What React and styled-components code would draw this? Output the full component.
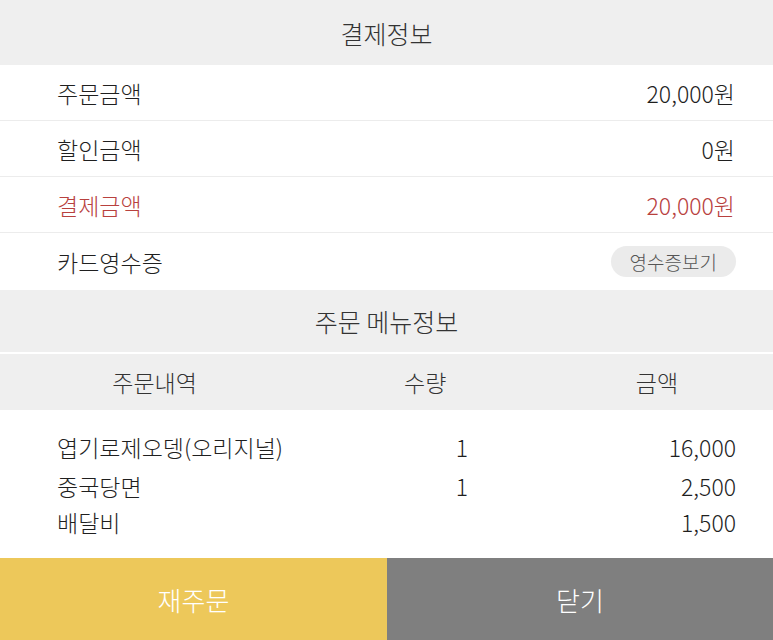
import styled, { createGlobalStyle } from "styled-components";

const GlobalStyle = createGlobalStyle`
  html, body {
    margin: 0;
    padding: 0;
    background: #fff;
  }
  body {
    font-family: "Noto Sans CJK KR", "Noto Sans", sans-serif;
    color: #222;
  }
  * { box-sizing: border-box; }
`;

const Page = styled.div`
  width: 773px;
  height: 640px;
  display: flex;
  flex-direction: column;
  background: #fff;
`;

const SectionTitle = styled.div`
  height: ${(p) => p.$h}px;
  display: flex;
  align-items: center;
  justify-content: center;
  background: #efefef;
  font-size: 25px;
  font-weight: 300;
  color: #333;
`;

const InfoRow = styled.div`
  height: ${(p) => p.$h || 56}px;
  display: flex;
  align-items: center;
  justify-content: space-between;
  padding: 0 38px 0 57px;
  font-size: 23px;
  font-weight: 300;
  color: ${(p) => (p.$accent ? "#b8413e" : "#1f1f1f")};
  border-bottom: ${(p) => (p.$last ? "none" : "1px solid #ececec")};
`;

const ReceiptButton = styled.button`
  font-family: inherit;
  font-size: 19px;
  font-weight: 300;
  color: #555;
  background: #ebebeb;
  border: none;
  border-radius: 16px;
  height: 31px;
  padding: 0 19px;
  margin-right: -1px;
`;

const ColumnHeader = styled.div`
  height: 58px;
  display: grid;
  grid-template-columns: 40% 30% 30%;
  align-items: center;
  background: #efefef;
  border-top: 2px solid #fff;
  font-size: 23px;
  font-weight: 300;
  color: #333;
  text-align: center;
`;

const ItemList = styled.div`
  flex: 1;
  padding: 17px 37px 0 57px;
`;

const ItemRow = styled.div`
  display: grid;
  grid-template-columns: 365px 80px 1fr;
  height: ${(p) => p.$h}px;
  align-items: center;
  font-size: 23px;
  font-weight: 300;
  color: #1f1f1f;
`;

const Qty = styled.span`
  text-align: center;
`;

const Price = styled.span`
  text-align: right;
`;

const Footer = styled.div`
  display: grid;
  grid-template-columns: 387px 1fr;
  height: 82px;
`;

const FooterButton = styled.button`
  font-family: inherit;
  border: none;
  font-size: 26px;
  font-weight: 300;
  color: #fff;
  background: ${(p) => (p.$primary ? "#edc85a" : "#7f7f7f")};
`;

const payment = [
  { label: "주문금액", value: "20,000원" },
  { label: "할인금액", value: "0원" },
  { label: "결제금액", value: "20,000원", accent: true },
];

const items = [
  { name: "엽기로제오뎅(오리지널)", qty: "1", price: "16,000", h: 40 },
  { name: "중국당면", qty: "1", price: "2,500", h: 37 },
  { name: "배달비", qty: "", price: "1,500", h: 36 },
];

export default function App() {
  return (
    <Page>
      <GlobalStyle />
      <SectionTitle $h={65}>결제정보</SectionTitle>
      {payment.map((p) => (
        <InfoRow key={p.label} $accent={p.accent}>
          <span>{p.label}</span>
          <span>{p.value}</span>
        </InfoRow>
      ))}
      <InfoRow $last $h={57}>
        <span>카드영수증</span>
        <ReceiptButton>영수증보기</ReceiptButton>
      </InfoRow>
      <SectionTitle $h={62}>주문 메뉴정보</SectionTitle>
      <ColumnHeader>
        <span>주문내역</span>
        <span>수량</span>
        <span>금액</span>
      </ColumnHeader>
      <ItemList>
        {items.map((it) => (
          <ItemRow key={it.name} $h={it.h}>
            <span>{it.name}</span>
            <Qty>{it.qty}</Qty>
            <Price>{it.price}</Price>
          </ItemRow>
        ))}
      </ItemList>
      <Footer>
        <FooterButton $primary>재주문</FooterButton>
        <FooterButton>닫기</FooterButton>
      </Footer>
    </Page>
  );
}
